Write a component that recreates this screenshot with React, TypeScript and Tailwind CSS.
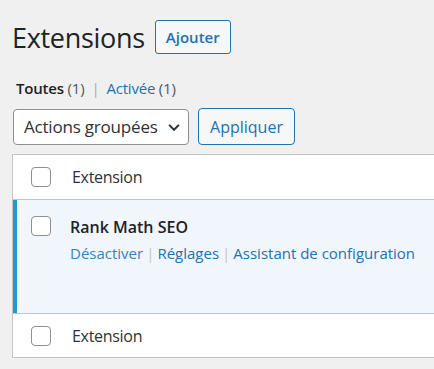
import React from 'react';

const font = { fontFamily: '"Open Sans", "Noto Sans", sans-serif' };

const Check = () => (
  <span className="block w-[20px] h-[20px] shrink-0 rounded-[4px] border border-[#8c8f94] bg-white" />
);

export default function App() {
  return (
    <div className="w-[434px] h-[369px] overflow-hidden bg-[#f0f0f1] text-[#3c434a]" style={font}>
      {/* En-tête */}
      <div className="flex items-center pl-[12px] pt-[20px]">
        <h1 className="text-[27px] leading-[33px] text-[#1d2327] tracking-[-0.3px]">Extensions</h1>
        <button className="ml-[10px] h-[34px] px-[10px] rounded-[3px] border border-[#2271b1] bg-[#f6f7f7] text-[15px] font-semibold text-[#2271b1]">
          Ajouter
        </button>
      </div>

      {/* Filtres */}
      <div className="pl-[16px] mt-[24px] text-[15px] leading-[20px] tracking-[-0.2px]">
        <span className="font-semibold text-[#1d2327]">Toutes</span>
        <span className="text-[#50575e]"> (1)</span>
        <span className="text-[#a7aaad] mx-[7px]">|</span>
        <span className="text-[#2271b1]">Activée</span>
        <span className="text-[#50575e]"> (1)</span>
      </div>

      {/* Actions */}
      <div className="flex items-center pl-[13px] mt-[10px] gap-[9px]">
        <div className="w-[176px] h-[36px] flex items-center justify-between pl-[10px] pr-[7px] rounded-[4px] border border-[#8c8f94] bg-white text-[17px] text-[#2c3338] tracking-[-0.2px]">
          <span>Actions groupées</span>
          <svg width="14" height="14" viewBox="0 0 20 20" className="text-[#2c3338]">
            <path d="M3 7l7 7 7-7" fill="none" stroke="currentColor" strokeWidth="2.8" />
          </svg>
        </div>
        <button className="w-[97px] h-[37px] rounded-[4px] border border-[#2271b1] bg-[#f6f7f7] text-[16px] text-[#2271b1]">
          Appliquer
        </button>
      </div>

      {/* Tableau */}
      <div className="ml-[12px] mt-[9px] w-[460px] border border-[#c3c4c7] bg-white">
        <div className="h-[45px] flex items-center border-b border-[#c3c4c7] pl-[18px]">
          <Check />
          <span className="ml-[21px] text-[16px] text-[#2c3338] tracking-[-0.3px]">Extension</span>
        </div>

        <div className="h-[113px] flex border-l-[4px] border-[#1e9ad3] bg-[#f0f6fc] pl-[14px] pt-[16px]">
          <Check />
          <div className="ml-[19px]">
            <div className="text-[16px] leading-[22px] font-semibold text-[#1d2327]">Rank Math SEO</div>
            <div className="mt-[5px] text-[15px] leading-[20px] text-[#2271b1]">
              <span className="text-[#3582c4]">Désactiver</span>
              <span className="text-[#c3c4c7] mx-[3px]">|</span>
              <span>Réglages</span>
              <span className="text-[#c3c4c7] mx-[3px]">|</span>
              <span>Assistant de configuration</span>
            </div>
          </div>
        </div>

        <div className="h-[44px] flex items-center border-t border-[#c3c4c7] pl-[18px]">
          <Check />
          <span className="ml-[21px] text-[16px] text-[#2c3338] tracking-[-0.3px]">Extension</span>
        </div>
      </div>
    </div>
  );
}
